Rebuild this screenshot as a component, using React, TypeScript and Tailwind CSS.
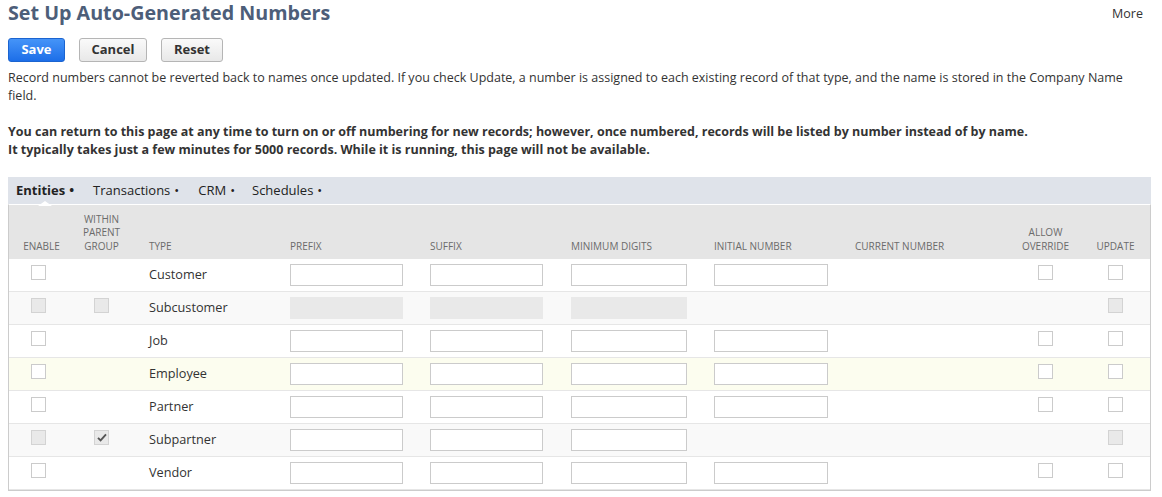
import React from "react";

type Cell = "cb" | "cbOff" | "cbChecked" | "in" | "inOff" | "";

type Row = {
  type: string;
  bg: string;
  enable: Cell;
  within: Cell;
  prefix: Cell;
  suffix: Cell;
  digits: Cell;
  initial: Cell;
  allow: Cell;
  update: Cell;
};

const rows: Row[] = [
  { type: "Customer", bg: "bg-white", enable: "cb", within: "", prefix: "in", suffix: "in", digits: "in", initial: "in", allow: "cb", update: "cb" },
  { type: "Subcustomer", bg: "bg-[#f9f9f9]", enable: "cbOff", within: "cbOff", prefix: "inOff", suffix: "inOff", digits: "inOff", initial: "", allow: "", update: "cbOff" },
  { type: "Job", bg: "bg-white", enable: "cb", within: "", prefix: "in", suffix: "in", digits: "in", initial: "in", allow: "cb", update: "cb" },
  { type: "Employee", bg: "bg-[#fcfdef]", enable: "cb", within: "", prefix: "in", suffix: "in", digits: "in", initial: "in", allow: "cb", update: "cb" },
  { type: "Partner", bg: "bg-white", enable: "cb", within: "", prefix: "in", suffix: "in", digits: "in", initial: "in", allow: "cb", update: "cb" },
  { type: "Subpartner", bg: "bg-[#f9f9f9]", enable: "cbOff", within: "cbChecked", prefix: "in", suffix: "in", digits: "in", initial: "", allow: "", update: "cbOff" },
  { type: "Vendor", bg: "bg-white", enable: "cb", within: "", prefix: "in", suffix: "in", digits: "in", initial: "in", allow: "cb", update: "cb" },
];

const Box = ({ kind }: { kind: Cell }) => {
  if (kind === "cb") return <span className="block w-[15px] h-[15px] border border-[#cbcbcb] bg-white" />;
  if (kind === "cbOff") return <span className="block w-[15px] h-[15px] border border-[#d3d3d3] bg-[#e9e9e9]" />;
  if (kind === "cbChecked")
    return (
      <span className="flex items-center justify-center w-[15px] h-[15px] border border-[#d3d3d3] bg-[#e9e9e9]">
        <svg width="10" height="9" viewBox="0 0 10 9">
          <path d="M1 4.8 L3.6 7.4 L9 1.4" fill="none" stroke="#555" strokeWidth="1.9" />
        </svg>
      </span>
    );
  return null;
};

const Field = ({ kind, w }: { kind: Cell; w: string }) => {
  if (kind === "in") return <input type="text" className={`${w} h-[22px] border border-[#cbcbcb] bg-white outline-none`} />;
  if (kind === "inOff") return <span className={`block ${w} h-[22px] bg-[#e9e9e9]`} />;
  return null;
};

const Th = ({ children, className = "" }: { children: React.ReactNode; className?: string }) => (
  <div className={`flex items-end pb-[6px] text-[10px] leading-[13.5px] text-[#6b6b6b] uppercase ${className}`}>{children}</div>
);

const Dot = () => <span className="ml-[4px] text-[13px]">•</span>;

const App = () => {
  return (
    <div className="w-[1162px] h-[497px] overflow-hidden bg-white pl-2 pr-[11px] font-['Open_Sans',sans-serif] text-[12.5px] text-[#333]">
      {/* Title bar */}
      <div className="flex justify-between items-start">
        <h1 className="text-[19.7px] font-bold leading-[26px] text-[#4d5e79]">Set Up Auto-Generated Numbers</h1>
        <span className="mt-[5px] mr-[8px] leading-[18px] text-[#333]">More</span>
      </div>

      {/* Buttons */}
      <div className="flex gap-[14px] mt-[12px]">
        <button className="h-[24px] w-[57px] rounded-[3px] border border-[#1b64d0] bg-gradient-to-b from-[#4594f8] to-[#1c6ee8] text-white font-bold text-[13px]">Save</button>
        <button className="h-[24px] w-[68px] rounded-[3px] border border-[#b5b5b5] bg-gradient-to-b from-[#fafafa] to-[#e8e8e8] font-bold text-[13px] text-[#333]">Cancel</button>
        <button className="h-[24px] w-[62px] rounded-[3px] border border-[#b5b5b5] bg-gradient-to-b from-[#fafafa] to-[#e8e8e8] font-bold text-[13px] text-[#333]">Reset</button>
      </div>

      <p className="mt-[7px] leading-[18px]">
        Record numbers cannot be reverted back to names once updated. If you check Update, a number is assigned to each existing record of that type, and the name is stored in the Company Name field.
      </p>

      <p className="mt-[18px] leading-[18px] font-bold">
        You can return to this page at any time to turn on or off numbering for new records; however, once numbered, records will be listed by number instead of by name.
        <br />
        It typically takes just a few minutes for 5000 records. While it is running, this page will not be available.
      </p>

      {/* Tabs */}
      <div className="relative mt-[18px] h-[27px] bg-[#dfe3ea] flex items-center pl-2 gap-[19px] text-[13px] text-[#222]">
        <span className="relative font-bold">
          Entities<Dot />
          <span className="absolute left-[22px] top-[20px] w-0 h-0 border-l-[7px] border-r-[7px] border-b-[5px] border-l-transparent border-r-transparent border-b-white" />
        </span>
        <span>Transactions<Dot /></span>
        <span>CRM<Dot /></span>
        <span className="-ml-[2px]">Schedules<Dot /></span>
      </div>

      {/* Table */}
      <div className="border-x border-b border-[#cccccc] border-t border-t-white">
        <div className="grid grid-cols-[59px_67px_145px_140px_141px_143px_141px_165px_71px_69px] h-[54px] bg-[#e5e5e5]">
          <Th className="justify-center pl-[6px]">Enable</Th>
          <Th className="justify-center text-center">Within<br />Parent<br />Group</Th>
          <Th className="pl-[14px]">Type</Th>
          <Th className="pl-[10px]">Prefix</Th>
          <Th className="pl-[10px]">Suffix</Th>
          <Th className="pl-[10px]">Minimum Digits</Th>
          <Th className="pl-[10px]">Initial Number</Th>
          <Th className="pl-[10px]">Current Number</Th>
          <Th className="justify-center text-center">Allow<br />Override</Th>
          <Th className="justify-center">Update</Th>
        </div>

        {rows.map((r) => (
          <div
            key={r.type}
            className={`grid grid-cols-[59px_67px_145px_140px_141px_143px_141px_165px_71px_69px] h-[33px] items-center border-b border-[#e6e6e6] ${r.bg}`}
          >
            <div className="flex justify-center self-start pt-[6px]"><Box kind={r.enable} /></div>
            <div className="flex justify-center self-start pt-[6px]"><Box kind={r.within} /></div>
            <div className="pl-[14px] text-[12.7px]">{r.type}</div>
            <div className="pl-[10px]"><Field kind={r.prefix} w="w-[113px]" /></div>
            <div className="pl-[10px]"><Field kind={r.suffix} w="w-[113px]" /></div>
            <div className="pl-[10px]"><Field kind={r.digits} w="w-[116px]" /></div>
            <div className="pl-[10px]"><Field kind={r.initial} w="w-[114px]" /></div>
            <div />
            <div className="flex justify-center self-start pt-[6px]"><Box kind={r.allow} /></div>
            <div className="flex justify-center self-start pt-[6px]"><Box kind={r.update} /></div>
          </div>
        ))}
      </div>
    </div>
  );
};

export default App;
